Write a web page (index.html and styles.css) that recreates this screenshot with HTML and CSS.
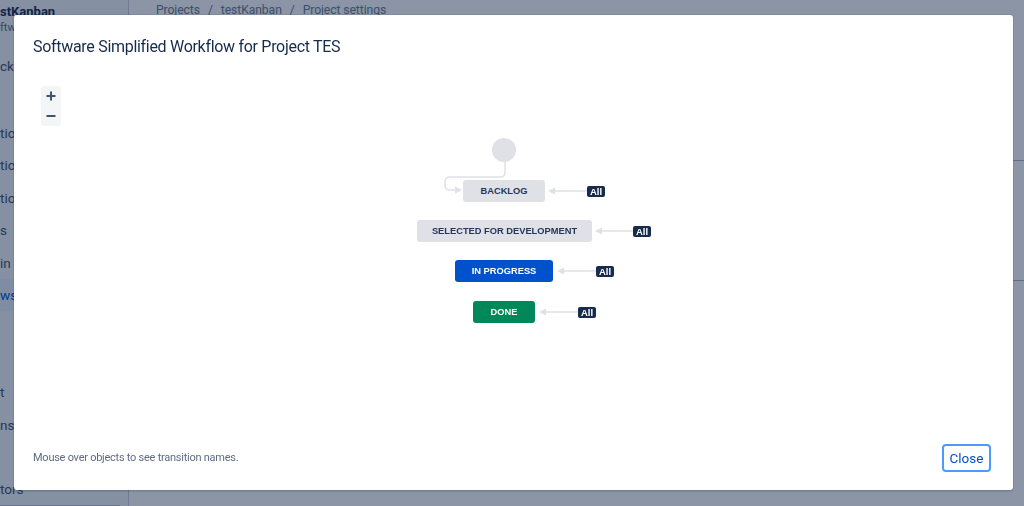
FILE: index.html
```html
<!DOCTYPE html>
<html lang="en">
<head>
<meta charset="utf-8">
<title>Project settings - Workflow</title>
<link rel="stylesheet" href="styles.css">
</head>
<body>
<div class="page">
  <aside class="sidebar">
    <div class="proj">
      <div class="proj-name">stKanban</div>
      <div class="proj-type">ftware project</div>
    </div>
    <div class="back">ck to project</div>
    <nav class="nav">
      <div class="nav-item">tions</div>
      <div class="nav-item">tions</div>
      <div class="nav-item">tions</div>
      <div class="nav-item">s</div>
      <div class="nav-item">in</div>
      <div class="nav-item nav-item-active">ws</div>
      <div class="nav-item"></div>
      <div class="nav-item"></div>
      <div class="nav-item">t</div>
      <div class="nav-item">ns</div>
      <div class="nav-item"></div>
      <div class="nav-item nav-item-last">tors</div>
    </nav>
  </aside>
  <main class="main">
    <div class="breadcrumb">
      <span>Projects</span><span class="sep">/</span><span>testKanban</span><span class="sep">/</span><span>Project settings</span>
    </div>
    <div class="table">
      <div class="table-row"></div>
      <div class="table-row"></div>
    </div>
  </main>
</div>

<div class="blanket"></div>

<div class="modal" role="dialog">
  <div class="modal-header">
    <h1 class="modal-title">Software Simplified Workflow for Project TES</h1>
  </div>
  <div class="canvas">
    <div class="zoom">
      <button class="zoom-btn" aria-label="Zoom in">
        <svg width="10" height="10" viewBox="0 0 10 10"><path d="M5 0.5V9.5M0.5 5H9.5" stroke="#42526e" stroke-width="2"/></svg>
      </button>
      <button class="zoom-btn" aria-label="Zoom out">
        <svg width="10" height="10" viewBox="0 0 10 10"><path d="M0.5 5H9.5" stroke="#42526e" stroke-width="2"/></svg>
      </button>
    </div>

    <svg class="links" width="999" height="360" viewBox="0 0 999 360">
      <circle cx="490" cy="80" r="12" fill="#dfe1e6"/>
      <path d="M491 92V102Q491 107 486 107H436Q431 107 431 112V115Q431 120 436 120H442" fill="none" stroke="#dfe1e6" stroke-width="1.5"/>
      <path d="M441 116.5L448 120L441 123.5Z" fill="#dfe1e6"/>

      <path d="M573 121H540" stroke="#dfe1e6" stroke-width="1.5"/>
      <path d="M541 117.5L534 121L541 124.5Z" fill="#dfe1e6"/>

      <path d="M619 161H587" stroke="#dfe1e6" stroke-width="1.5"/>
      <path d="M588 157.5L581 161L588 164.5Z" fill="#dfe1e6"/>

      <path d="M582 201H549" stroke="#dfe1e6" stroke-width="1.5"/>
      <path d="M550 197.5L543 201L550 204.5Z" fill="#dfe1e6"/>

      <path d="M564 242H531" stroke="#dfe1e6" stroke-width="1.5"/>
      <path d="M532 238.5L525 242L532 245.5Z" fill="#dfe1e6"/>
    </svg>

    <div class="status status-todo" style="left:449px;top:110px;width:82px">BACKLOG</div>
    <div class="status status-todo" style="left:403px;top:150px;width:175px">SELECTED FOR DEVELOPMENT</div>
    <div class="status status-progress" style="left:441px;top:190px;width:98px">IN PROGRESS</div>
    <div class="status status-done" style="left:459px;top:231px;width:62px">DONE</div>

    <div class="badge" style="left:573px;top:116px">All</div>
    <div class="badge" style="left:619px;top:156px">All</div>
    <div class="badge" style="left:582px;top:196px">All</div>
    <div class="badge" style="left:564px;top:237px">All</div>
  </div>
  <div class="modal-footer">
    <p class="hint">Mouse over objects to see transition names.</p>
    <button class="close-btn">Close</button>
  </div>
</div>
</body>
</html>
```

FILE: styles.css
```css
* { box-sizing: border-box; }

html, body {
  margin: 0;
  padding: 0;
  width: 1024px;
  height: 506px;
  overflow: hidden;
  font-family: Roboto, "Noto Sans", "Liberation Sans", sans-serif;
  color: #172b4d;
  background: #ffffff;
}

.page {
  display: flex;
  height: 506px;
}

.sidebar {
  width: 129px;
  flex: none;
  background: #f4f5f7;
  border-right: 1px solid #c6ccd6;
  display: flex;
  flex-direction: column;
  overflow: hidden;
  white-space: nowrap;
}

.proj {
  padding-top: 4px;
}

.proj-name {
  font-size: 13px;
  font-weight: 700;
  line-height: 16px;
  color: #172b4d;
}

.proj-type {
  font-size: 11px;
  line-height: 16px;
  color: #5e6c84;
}

.back {
  margin-top: 22px;
  font-size: 13.5px;
  line-height: 16px;
  color: #42526e;
}

.nav {
  margin-top: 43px;
  display: flex;
  flex-direction: column;
}

.nav-item {
  height: 32.4px;
  line-height: 32.4px;
  font-size: 13.5px;
  color: #42526e;
}

.nav-item-active {
  background: #e6effc;
  color: #0052cc;
}

.nav-item-last {
  border-bottom: 1px solid #c1c7d0;
  margin-right: 8px;
}

.main {
  flex: 1;
  padding-left: 27px;
}

.breadcrumb {
  margin-top: 2px;
  font-size: 12.2px;
  line-height: 16px;
  letter-spacing: -0.1px;
  color: #6f7b8f;
  display: flex;
}

.sep {
  padding: 0 8px;
}

.table {
  margin-top: 142px;
}

.table-row {
  height: 120px;
  border-top: 1px solid #aeb6c4;
}

.blanket {
  position: fixed;
  inset: 0;
  background: rgba(9, 30, 66, 0.47);
}

.modal {
  position: fixed;
  left: 14px;
  top: 15px;
  width: 999px;
  height: 475px;
  background: #ffffff;
  border-radius: 3px;
  display: flex;
  flex-direction: column;
  box-shadow: 0 0 0 1px rgba(9, 30, 66, 0.08), 0 2px 1px rgba(9, 30, 66, 0.1);
}

.modal-header {
  height: 55px;
  flex: none;
  padding: 22px 19px 0;
}

.modal-title {
  margin: 0;
  font-size: 16px;
  line-height: 20px;
  letter-spacing: -0.3px;
  font-weight: 400;
  color: #172b4d;
}

.canvas {
  flex: 1;
  position: relative;
}

.zoom {
  position: absolute;
  left: 27px;
  top: 16px;
  width: 20px;
  height: 40px;
  background: #f4f5f7;
  border-radius: 3px;
  display: flex;
  flex-direction: column;
}

.zoom-btn {
  flex: 1;
  border: 0;
  padding: 0;
  margin: 0;
  background: transparent;
  display: flex;
  align-items: center;
  justify-content: center;
}

.links {
  position: absolute;
  left: 0;
  top: 0;
}

.status {
  position: absolute;
  height: 22px;
  border-radius: 3px;
  display: flex;
  align-items: center;
  justify-content: center;
  font-family: "Liberation Sans", Arial, sans-serif;
  font-weight: 700;
  font-size: 9.3px;
  white-space: nowrap;
}

.status-todo {
  background: #dfe1e6;
  color: #253858;
}

.status-progress {
  background: #0052cc;
  color: #ffffff;
}

.status-done {
  background: #00875a;
  color: #ffffff;
}

.badge {
  position: absolute;
  width: 18px;
  height: 11px;
  border-radius: 2px;
  background: #172b4d;
  color: #ffffff;
  font-family: "Liberation Sans", Arial, sans-serif;
  font-weight: 700;
  font-size: 9.5px;
  line-height: 11px;
  text-align: center;
}

.modal-footer {
  height: 60px;
  flex: none;
  display: flex;
  align-items: center;
  justify-content: space-between;
  padding: 0 22px 4px 19px;
}

.hint {
  margin: 0;
  font-size: 11px;
  line-height: 14px;
  letter-spacing: -0.25px;
  color: #5e6c84;
}

.close-btn {
  width: 49px;
  height: 28px;
  border: 2px solid #4c9aff;
  border-radius: 4px;
  background: #ffffff;
  color: #0052cc;
  font-family: Roboto, "Noto Sans", sans-serif;
  font-size: 13.5px;
  padding: 0;
}
```
